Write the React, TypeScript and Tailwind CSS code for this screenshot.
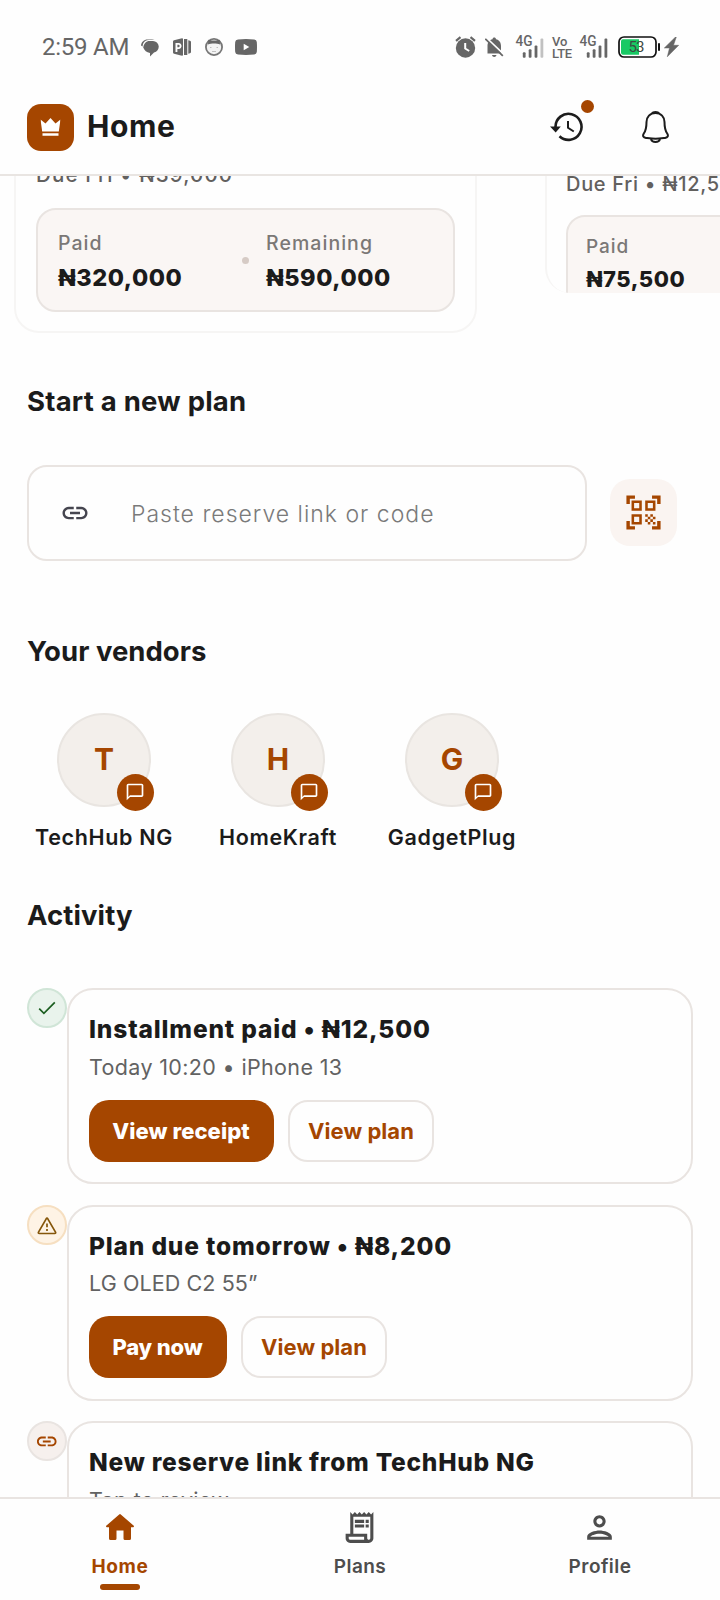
import type { ReactNode } from "react";
import {
  MdChatBubbleOutline,
  MdLink,
  MdOutlinePerson,
  MdOutlineReceiptLong,
  MdQrCodeScanner,
} from "react-icons/md";

function StatusBar() {
  return (
    <div className="flex h-[78px] shrink-0 items-start pt-[32px] pl-[42px] font-[Roboto,sans-serif] text-[#666666]">
      <span className="h-[30px] w-[99px] text-[24px] leading-[31px] tracking-[-0.250px] whitespace-nowrap">2:59 AM</span>
      <svg className="mt-[7px]" width="18" height="18" viewBox="0 0 18 18" fill="currentColor">
        <path d="M0 6.500C.4 3 3 .5 6.500.5h4.500c1 0 1.800.2 2.500.6H8C5 1.100 3 2.600 2 5L1.500 7.500z" />
        <path d="M8.500 2H12a5.800 5.800 0 0 1 1 11.500L9 17.500V14C5.500 13.500 3.500 11.500 2.200 8.500 3 4.500 5 2 8.500 2z" />
      </svg>
      <svg className="mt-[6px] ml-[14px]" width="18" height="18" viewBox="0 0 18 18" fill="currentColor">
        <path fillRule="evenodd" d="M0 3.500Q0 2.500 1 2.200L8 .5q2-.5 2 .5v16q0 1-2 .5L1 15.800Q0 15.500 0 14.500zM2.500 5v9h1.900v-3h1.300C9.500 11 9.500 5 5.700 5zM4.400 6.800h1.200c1.500 0 1.500 2.400 0 2.400H4.400z" />
        <path d="M11 1h3.300v16H11zM15.300 2.200l1.700.5q1 .3 1 1.300v10q0 1-1 1.300l-1.700.5z" />
      </svg>
      <svg className="mt-[6px] ml-[14px]" width="18" height="18" viewBox="0 0 18 18">
        <circle cx="9" cy="9" r="8.100" fill="#f4f4f4" stroke="#777777" strokeWidth="1.800" />
        <path d="M3 6.500 3.300 1.800 7 2.500h4l3.700-.7.300 4.700C12 5.200 6 5.200 3 6.500z" fill="#666666" />
        <path d="M5 9.500h1.500M11.500 9.500H13M7 13.500h4" stroke="#c0c0c0" strokeWidth="1.200" />
      </svg>
      <svg className="mt-[7px] ml-[12px]" width="22" height="16" viewBox="0 0 22 16">
        <path d="M3 .4Q11-.4 19 .4 21.700.7 21.800 3q.4 5 0 10-.2 2.300-2.800 2.600-8 .8-16 0Q.4 15.300.2 13q-.4-5 0-10Q.4.7 3 .4z" fill="currentColor" />
        <path d="M8.700 4.800v6.400l5.600-3.200z" fill="#ffffff" />
      </svg>

      <svg className="mt-[4px] ml-[198px]" width="21" height="22" viewBox="0 0 21 22">
        <circle cx="10.500" cy="12" r="9.700" fill="currentColor" />
        <path d="M1 4.800 5.500 1.200M20 4.800 15.500 1.200" stroke="currentColor" strokeWidth="2.200" />
        <path d="M10.200 7v5.500l4 2.500" fill="none" stroke="#ffffff" strokeWidth="2" />
      </svg>
      <svg className="mt-[5px] ml-[9px]" width="19" height="21" viewBox="0 0 19 21">
        <path d="M2.500 16.500V9c0-4 2-6 5-6.800C7.500-.2 11-.2 11 2.200c3 .8 5 2.800 5 6.800v7.500zM7 18h4.500c-.3 2.500-4.200 2.500-4.500 0z" fill="currentColor" />
        <path d="M1 .5l18 17" stroke="#ffffff" strokeWidth="1.800" />
        <path d="M.3 1.800l17.500 17" stroke="currentColor" strokeWidth="1.800" />
      </svg>
      <Signal faded className="mt-[4px] ml-[11px]" />
      <div className="mt-[35px] -translate-y-[31px] ml-[8px] flex w-[21px] flex-col text-[13px] leading-[12px] font-medium">
        <span>Vo</span>
        <span className="tracking-[-0.300px]">LTE</span>
      </div>
      <Signal className="mt-[4px] ml-[6px]" />
      <svg className="mt-[4px] ml-[10px]" width="44" height="22" viewBox="0 0 44 22">
        <rect x="1" y="1" width="37" height="20" rx="5" fill="#ffffff" stroke="#111111" strokeWidth="1.700" />
        <path d="M5 3.300h16v15.400H5a2 2 0 0 1-2-2V5.300a2 2 0 0 1 2-2z" fill="#18c964" />
        <path d="M40 7.200h2v7.500h-2z" fill="#111111" />
        <text x="10.500" y="15.800" className="text-[15px]" fill="#3c4a42" textLength="16">53</text>
      </svg>
      <svg className="mt-[5px] ml-[2px]" width="15" height="20" viewBox="0 0 15 20" fill="currentColor">
        <path d="M11.500 0 .3 11h5.200L3.300 19.800 14.700 8.300H9.500L12.300 0z" stroke="currentColor" strokeWidth="0.500" />
      </svg>
    </div>
  );
}

function Signal({ faded = false, className }: { faded?: boolean; className: string }) {
  return (
    <svg className={`overflow-visible ${className}`} width="29" height="23" viewBox="0 0 29 23" fill="currentColor">
      <text x="0.500" y="10" className="text-[14px] font-medium" textLength="17" lengthAdjust="spacingAndGlyphs">4G</text>
      <rect x="7.800" y="16.200" width="2.800" height="5.600" rx="1" />
      <rect x="13.700" y="13.200" width="2.800" height="8.600" rx="1" />
      <rect x="19.600" y="9.500" width="2.800" height="12.300" rx="1" />
      <rect x="25.500" y="2.500" width="2.800" height="19.300" rx="1" opacity={faded ? 0.4 : 1} />
    </svg>
  );
}

function Header() {
  return (
    <header className="flex h-[98px] shrink-0 items-center border-b-2 border-[#e9e5e2] pt-[2px] pr-[51px] pl-[27px]">
      <div className="flex size-[47px] items-center justify-center rounded-[14px] bg-[#a54600]">
        <svg className="-translate-x-[0.500px]" width="20" height="18" viewBox="0 0 20 18" fill="#ffffff">
          <path d="M0 1.500 5 5.400 10 0l5 5.400 5-3.900-1.700 12H1.700zM2 15.300h16v2.500H2z" />
        </svg>
      </div>
      <h1 className="-mt-[2px] ml-[13px] text-[30px] leading-9 font-bold tracking-[0.600px]">Home</h1>
      <div className="relative ml-auto">
        <svg width="33" height="30" viewBox="0 0 33 30" fill="none" stroke="#1c1c1c">
          <path d="M5.500 15a13 13 0 1 1 4 9.200" strokeWidth="2.600" />
          <path d="M0 14.500h10.800L5.700 20.500z" fill="#1c1c1c" stroke="none" />
          <path d="M18 9v6.800l5.800 3.700" strokeWidth="2" />
        </svg>
        <span className="absolute -top-[12px] left-[31px] size-[13px] rounded-full bg-[#a54600]" />
      </div>
      <svg className="ml-[59px]" width="27" height="33" viewBox="0 0 27 33" fill="none" stroke="#1c1c1c" strokeWidth="2">
        <path d="M13.500 2C8 2 4.500 6 4.500 11c0 6-.5 8.500-2.700 11.500-1.500 2.500-.5 4 2.200 4.400 3 .4 6.200.9 9.500.9s6.500-.5 9.500-.9c2.700-.4 3.700-1.900 2.200-4.400C23 19.500 22.500 17 22.500 11c0-5-3.500-9-9-9z" />
        <path d="M10 2.500c1-2 6-2 7 0M9 28c1 4 8 4 9 0" />
      </svg>
    </header>
  );
}

function PlanCards() {
  return (
    <div className="-mt-[26px] flex h-[182px] shrink-0 items-start gap-[68px] pl-[14px]">
      <div className="h-[183px] w-[463px] shrink-0 rounded-[25px] border-2 border-[#f6f5f4] px-5 pt-[11px]">
        <p className="h-6 text-[20.500px] leading-6 font-medium tracking-[1.150px] text-[#62605e]">Due Fri • ₦39,000</p>
        <div className="mt-[21px] flex h-[104px] items-center rounded-[20px] border-2 border-[#e9e4e1] bg-[#faf6f4] pl-5">
          <Amount label="Paid" value="₦320,000" />
          <span className="mr-[17px] size-[7px] rounded-full bg-[#d6cbc5]" />
          <Amount label="Remaining" value="₦590,000" />
        </div>
      </div>
      <div className="h-[143px] w-[440px] shrink-0 overflow-hidden rounded-[25px] border-2 border-b-0 border-[#f6f5f4] pt-5 pl-[19px]">
        <p className="h-6 text-[20px] leading-6 font-medium tracking-[0.700px] text-[#62605e]">Due Fri • ₦12,500</p>
        <div className="mt-[19px] h-[98px] w-[400px] rounded-[19px] border-2 border-[#e9e4e1] bg-[#faf6f4] pt-[18px] pl-[18px]">
          <p className="h-6 text-[19px] leading-6 font-medium tracking-[0.900px] text-[#7b7876]">Paid</p>
          <p className="mt-[7px] text-[22px] leading-[26px] font-extrabold tracking-[0.500px]">₦75,500</p>
        </div>
      </div>
    </div>
  );
}

function Amount({ label, value }: { label: string; value: string }) {
  return (
    <div className="w-[184px] shrink-0 pt-[2px]">
      <p className="h-6 text-[19.500px] leading-6 font-medium tracking-[1.050px] text-[#7b7876]">{label}</p>
      <p className="mt-[9px] text-[23.500px] leading-7 font-extrabold tracking-[0.550px]">{value}</p>
    </div>
  );
}

function SectionTitle({ children, className }: { children: ReactNode; className: string }) {
  return <h2 className={`h-[34px] shrink-0 pl-[27px] text-[27.500px] leading-[34px] font-bold ${className}`}>{children}</h2>;
}

function Vendor({ name }: { name: string }) {
  return (
    <div className="flex w-[174px] flex-col items-center">
      <div className="relative flex size-[94px] items-center justify-center rounded-full border-2 border-[#e9e5e1] bg-[#f3efeb]">
        <span className="-mt-[2px] text-[30px] leading-9 font-bold text-[#a54600]">{name[0]}</span>
        <span className="absolute top-[58.500px] left-[58px] flex size-[37px] items-center justify-center rounded-full bg-[#a54600] pr-[2px] pb-[1px] text-white">
          <MdChatBubbleOutline size={20} />
        </span>
      </div>
      <p className="mt-4 text-[21.500px] leading-7 font-semibold tracking-[0.650px]">{name}</p>
    </div>
  );
}

type ActivityProps = {
  icon: ReactNode;
  badge: string;
  title: string;
  titleClass: string;
  detail: string;
  detailClass: string;
  action?: string;
  actionClass?: string;
};

function ActivityItem({ icon, badge, title, titleClass, detail, detailClass, action, actionClass = "" }: ActivityProps) {
  return (
    <div className="flex shrink-0 items-start">
      <span className={`flex size-10 shrink-0 items-center justify-center rounded-full border-2 ${badge}`}>{icon}</span>
      <div className="h-[196px] w-[626px] rounded-[26px] border-2 border-[#e9e4e1] px-5 pt-6">
        <h3 className={`text-[24.500px] leading-[30px] font-extrabold whitespace-nowrap ${titleClass}`}>{title}</h3>
        <p className={`mt-[9.700px] text-[21.500px] leading-[26px] text-[#626262] ${detailClass}`}>{detail}</p>
        {action && (
          <div className="mt-[20.200px] flex gap-[14px]">
            <button className={`h-[62px] rounded-[20px] bg-[#a54600] pt-px pr-px text-[22px] font-extrabold text-white ${actionClass}`}>{action}</button>
            <button className="h-[62px] w-[146px] rounded-[20px] border-2 border-[#e9e4e1] pt-px text-[22px] font-bold tracking-[0.060px] text-[#a54600]">
              View plan
            </button>
          </div>
        )}
      </div>
    </div>
  );
}

function CheckIcon() {
  return (
    <svg width="18" height="14" viewBox="0 0 18 14" fill="none" stroke="#1b5e20" strokeWidth="1.700">
      <path d="M1.200 7.600 5.900 12.300 16.800 1.400" />
    </svg>
  );
}

function WarningIcon() {
  return (
    <svg className="mt-[2px]" width="20" height="18" viewBox="0 0 20 18" fill="none" stroke="#85560a" strokeWidth="1.700" strokeLinejoin="round">
      <path d="M9.200 1.800 1.500 15.200q-.6 1.300.8 1.300h15.400q1.400 0 .8-1.300L10.800 1.800q-.8-1.300-1.600 0z" />
      <path d="M10 6.500v3.700M10 12v2" />
    </svg>
  );
}

function NavItem({ label, icon, active = false }: { label: string; icon: ReactNode; active?: boolean }) {
  return (
    <div className={`flex w-60 flex-col items-center ${active ? "font-bold tracking-[0.600px] text-[#a54600]" : "font-semibold tracking-[0.450px] text-[#4d4d4d]"}`}>
      <span className="mt-[9px] flex h-[38px] items-center">{icon}</span>
      <span className="mt-[9px] text-[19px] leading-6">{label}</span>
      {active && <span className="mt-[5px] h-[5.500px] w-10 rounded-full bg-[#a54600]" />}
    </div>
  );
}

export default function App() {
  return (
    <div className="flex h-[1600px] w-[720px] flex-col overflow-hidden bg-[#fefefe] font-[Inter,sans-serif] text-[#1b1b1b]">
      <StatusBar />
      <Header />
      <main className="flex min-h-0 flex-1 flex-col overflow-hidden">
        <PlanCards />
        <SectionTitle className="mt-[52px] tracking-[0.220px]">Start a new plan</SectionTitle>
        <div className="mt-[47px] flex shrink-0 items-center pl-[27px]">
          <div className="flex h-24 w-[560px] items-center rounded-[20px] border-2 border-[#e9e4e1] pl-[30.500px]">
            <MdLink size={30} className="text-[#45454f]" />
            <span className="mt-px ml-[41.500px] text-[23px] leading-8 font-light tracking-[1px] text-[#7a7a7a]">Paste reserve link or code</span>
          </div>
          <button className="-mt-px ml-[23px] flex size-[67px] items-center justify-center rounded-[20px] bg-[#faf4f1] text-[#a54600]">
            <MdQrCodeScanner size={41} />
          </button>
        </div>
        <SectionTitle className="mt-[73px] tracking-[0.020px]">Your vendors</SectionTitle>
        <div className="mt-[45px] flex shrink-0 pl-[17px]">
          <Vendor name="TechHub NG" />
          <Vendor name="HomeKraft" />
          <Vendor name="GadgetPlug" />
        </div>
        <SectionTitle className="mt-[47px] tracking-[0.100px]">Activity</SectionTitle>
        <div className="mt-14 flex shrink-0 flex-col gap-[20.600px] pl-[27px]">
          <ActivityItem
            icon={<CheckIcon />}
            badge="border-[#d0e5d7] bg-[#e9f3ec]"
            title="Installment paid • ₦12,500"
            titleClass="tracking-[0.850px]"
            detail="Today 10:20 • iPhone 13"
            detailClass="tracking-[0.350px]"
            action="View receipt"
            actionClass="w-[185px] tracking-[0.060px]"
          />
          <ActivityItem
            icon={<WarningIcon />}
            badge="border-[#f6dfc1] bg-[#fef3e5]"
            title="Plan due tomorrow • ₦8,200"
            titleClass="tracking-[0.830px]"
            detail="LG OLED C2 55”"
            detailClass="tracking-[0.100px]"
            action="Pay now"
            actionClass="w-[138px] tracking-[-0.150px]"
          />
          <ActivityItem
            icon={<MdLink size={23.500} className="translate-y-[0.700px] text-[#a54600]" />}
            badge="border-[#e9e4e1] bg-[#f6f0ed]"
            title="New reserve link from TechHub NG"
            titleClass="tracking-[0.740px]"
            detail="Tap to review"
            detailClass="tracking-[0.300px]"
          />
        </div>
      </main>
      <nav className="flex h-[103px] shrink-0 border-t-2 border-[#e9e4e1] bg-[#fefefe]">
        <NavItem
          active
          label="Home"
          icon={
            <svg className="-mt-[1px]" width="28" height="26" viewBox="0 0 28 26" fill="currentColor">
              <path d="M13.200.400a1.200 1.200 0 0 1 1.600 0L27.800 11.800q.5 1.200-.7 1.400H25v11.300q0 1.500-1.500 1.500h-4.500q-1.500 0-1.500-1.500V16.500h-7v8q0 1.500-1.500 1.500H4.500Q3 26 3 24.500V13.200H.900Q-.300 13 .2 11.800z" />
            </svg>
          }
        />
        <NavItem label="Plans" icon={<MdOutlineReceiptLong size={37} className="mr-px" />} />
        <NavItem label="Profile" icon={<MdOutlinePerson size={37} className="mr-px" />} />
      </nav>
    </div>
  );
}
